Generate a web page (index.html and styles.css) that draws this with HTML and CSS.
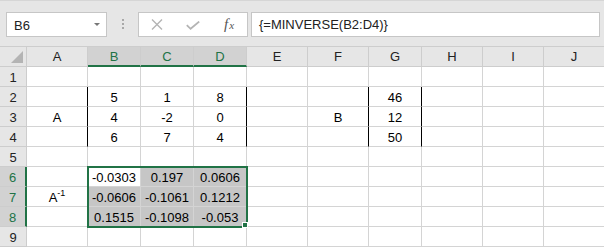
FILE: index.html
```html
<!DOCTYPE html>
<html lang="en">
<head>
    <meta charset="UTF-8">
    <title>MINVERSE</title>
    <link rel="stylesheet" href="styles.css">
</head>
<body>
    <div class="formula-bar">
        <div class="name-box">
            <span>B6</span>
            <span class="drop"></span>
        </div>
        <div class="dots"><i></i><i></i><i></i></div>
        <div class="fx-buttons">
            <svg class="icon-x" width="12" height="11" viewBox="0 0 12 11"><path d="M1 0.5 L11 10.5 M11 0.5 L1 10.5" stroke="#b4b4b4" stroke-width="1.4" fill="none"/></svg>
            <svg class="icon-ok" width="14" height="9" viewBox="0 0 14 9"><path d="M0.8 4.2 L4.6 7.8 L13.2 0.6" stroke="#b4b4b4" stroke-width="1.8" fill="none"/></svg>
            <span class="fx">f<sub>x</sub></span>
        </div>
        <div class="formula">{=MINVERSE(B2:D4)}</div>
    </div>

    <div class="sheet">
        <div class="corner"><span></span></div>
        <div class="ch">A</div>
        <div class="ch sel">B</div>
        <div class="ch sel">C</div>
        <div class="ch sel">D</div>
        <div class="ch">E</div>
        <div class="ch">F</div>
        <div class="ch">G</div>
        <div class="ch">H</div>
        <div class="ch">I</div>
        <div class="ch">J</div>

        <div class="rh">1</div>
        <div class="c"></div><div class="c"></div><div class="c"></div><div class="c"></div><div class="c"></div>
        <div class="c"></div><div class="c"></div><div class="c"></div><div class="c"></div><div class="c"></div>

        <div class="rh">2</div>
        <div class="c bk"></div><div class="c">5</div><div class="c">1</div><div class="c bk">8</div><div class="c"></div>
        <div class="c bk"></div><div class="c bk">46</div><div class="c"></div><div class="c"></div><div class="c"></div>

        <div class="rh">3</div>
        <div class="c bk">A</div><div class="c">4</div><div class="c">-2</div><div class="c bk">0</div><div class="c"></div>
        <div class="c bk">B</div><div class="c bk">12</div><div class="c"></div><div class="c"></div><div class="c"></div>

        <div class="rh">4</div>
        <div class="c bk"></div><div class="c">6</div><div class="c">7</div><div class="c bk">4</div><div class="c"></div>
        <div class="c bk"></div><div class="c bk">50</div><div class="c"></div><div class="c"></div><div class="c"></div>

        <div class="rh">5</div>
        <div class="c"></div><div class="c"></div><div class="c"></div><div class="c"></div><div class="c"></div>
        <div class="c"></div><div class="c"></div><div class="c"></div><div class="c"></div><div class="c"></div>

        <div class="rh sel">6</div>
        <div class="c"></div><div class="c">-0.0303</div><div class="c sh">0.197</div><div class="c sh">0.0606</div><div class="c"></div>
        <div class="c"></div><div class="c"></div><div class="c"></div><div class="c"></div><div class="c"></div>

        <div class="rh sel">7</div>
        <div class="c">A<sup>-1</sup></div><div class="c sh">-0.0606</div><div class="c sh">-0.1061</div><div class="c sh">0.1212</div><div class="c"></div>
        <div class="c"></div><div class="c"></div><div class="c"></div><div class="c"></div><div class="c"></div>

        <div class="rh sel">8</div>
        <div class="c"></div><div class="c sh">0.1515</div><div class="c sh">-0.1098</div><div class="c sh">-0.053</div><div class="c"></div>
        <div class="c"></div><div class="c"></div><div class="c"></div><div class="c"></div><div class="c"></div>

        <div class="rh">9</div>
        <div class="c"></div><div class="c"></div><div class="c"></div><div class="c"></div><div class="c"></div>
        <div class="c"></div><div class="c"></div><div class="c"></div><div class="c"></div><div class="c"></div>

        <div class="selection"></div>
        <div class="fill-handle"></div>
    </div>
</body>
</html>
```

FILE: styles.css
```css
body {
    margin: 0;
    width: 604px;
    height: 247px;
    overflow: hidden;
    background-color: #fff;
    font-family: "Liberation Sans", Arial, sans-serif;
    font-size: 13px;
    color: #000;
}
.formula-bar {
    display: flex;
    align-items: flex-start;
    height: 46px;
    padding: 11px 4px 0 6px;
    box-sizing: border-box;
    background-color: #e6e6e6;
    border-top: 1px solid #d6d6d6;
}
.name-box {
    width: 101px;
    height: 25px;
    box-sizing: border-box;
    display: flex;
    align-items: center;
    justify-content: space-between;
    padding: 1px 6px 0 7px;
    background-color: #fff;
    border: 1px solid #c6c6c6;
    color: #222;
}
.drop {
    width: 0;
    height: 0;
    border-left: 3px solid transparent;
    border-right: 3px solid transparent;
    border-top: 3px solid #777;
    margin-bottom: 2px;
}
.dots {
    width: 31px;
    height: 25px;
    display: flex;
    flex-direction: column;
    align-items: center;
    gap: 2px;
    padding-top: 7px;
    box-sizing: border-box;
}
.dots i {
    width: 2px;
    height: 2px;
    background-color: #a8a8a8;
}
.fx-buttons {
    width: 110px;
    height: 25px;
    box-sizing: border-box;
    display: flex;
    align-items: center;
    background-color: #fff;
    border: 1px solid #c6c6c6;
}
.icon-x {
    margin-left: 12px;
}
.icon-ok {
    margin-left: 23px;
    margin-top: 1px;
}
.fx {
    margin-left: 24px;
    font-family: "Liberation Serif", serif;
    font-style: italic;
    font-size: 15px;
    color: #555;
}
.fx sub {
    font-size: 11px;
    vertical-align: 0;
    margin-left: 1px;
}
.formula {
    flex: 1;
    margin-left: 3px;
    height: 25px;
    box-sizing: border-box;
    padding: 4px 0 0 7px;
    background-color: #fff;
    border: 1px solid #c6c6c6;
    color: #222;
    white-space: nowrap;
}
.sheet {
    position: relative;
    display: grid;
    grid-template-columns: 27px 61px 53px 53px 53px 61px 61px 53px 61px 61px 61px;
    grid-template-rows: 21px repeat(9, 20px);
}
.sheet > div {
    box-sizing: border-box;
}
.corner,
.ch,
.rh {
    background-color: #e6e6e6;
    border-right: 1px solid #cdcdcd;
    border-bottom: 1px solid #cdcdcd;
    color: #222;
    text-align: center;
}
.corner,
.ch {
    border-top: 1px solid #cdcdcd;
    line-height: 19px;
}
.corner {
    position: relative;
}
.corner span {
    position: absolute;
    right: 3px;
    bottom: 3px;
    width: 0;
    height: 0;
    border-left: 12px solid transparent;
    border-bottom: 12px solid #b4b4b4;
}
.ch.sel {
    background-color: #d2d2d2;
    color: #217346;
    border-bottom: 2px solid #217346;
}
.rh {
    padding-top: 1px;
    line-height: 19px;
}
.rh.sel {
    background-color: #d2d2d2;
    color: #217346;
    border-right: 2px solid #217346;
}
.c {
    border-right: 1px solid #d4d4d4;
    border-bottom: 1px solid #d4d4d4;
    text-align: center;
    padding-top: 1px;
    line-height: 19px;
    white-space: nowrap;
    overflow: hidden;
}
.c.bk {
    border-right-color: #000;
}
.c.sh {
    background-color: #c6c6c6;
}
.c sup {
    font-size: 9px;
    vertical-align: 6px;
    line-height: 0;
}
.selection {
    position: absolute;
    left: 87px;
    top: 120px;
    width: 161px;
    height: 62px;
    border: 2px solid #217346;
    box-sizing: border-box;
    pointer-events: none;
}
.fill-handle {
    position: absolute;
    left: 242px;
    top: 176px;
    width: 6px;
    height: 6px;
    background-color: #217346;
    border: 1px solid #fff;
}
```
